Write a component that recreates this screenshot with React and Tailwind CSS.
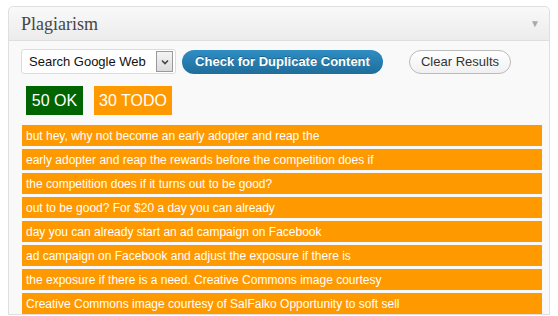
import React from "react";

const ROWS = [
  "but hey, why not become an early adopter and reap the",
  "early adopter and reap the rewards before the competition does if",
  "the competition does if it turns out to be good?",
  "out to be good? For $20 a day you can already",
  "day you can already start an ad campaign on Facebook",
  "ad campaign on Facebook and adjust the exposure if there is",
  "the exposure if there is a need. Creative Commons image courtesy",
  "Creative Commons image courtesy of SalFalko Opportunity to soft sell",
];

export default function App() {
  return (
    <div
      className="h-[316px] overflow-hidden bg-white pl-[8px] pt-[6px]"
      style={{ fontFamily: '"Liberation Sans", Arial, sans-serif' }}
    >
      <div className="w-[542px] rounded-t-[5px] border border-[#dfdfdf] bg-[#f9f9f9]">
        <div className="flex h-[34px] items-center justify-between rounded-t-[5px] border-b border-[#dfdfdf] bg-gradient-to-b from-[#f9f9f9] to-[#ececec] pl-[12px] pr-[9px]">
          <h3
            className="text-[18px] leading-none text-[#464646]"
            style={{ fontFamily: '"Liberation Serif", Georgia, serif' }}
          >
            Plagiarism
          </h3>
          <span className="text-[10px] text-[#aaa]">▼</span>
        </div>

        <div className="pl-[12px] pt-[8px]">
          <div className="flex items-center">
            <div className="flex h-[25px] w-[155px] items-center justify-between rounded-[3px] border border-[#dcdcdc] bg-white pl-[7px] pr-[2px]">
              <span className="text-[13px] text-[#111]">Search Google Web</span>
              <span className="flex h-[21px] w-[17px] items-center justify-center border border-[#9a9a9a] bg-gradient-to-b from-[#f4f4f4] to-[#dcdcdc]">
                <svg width="8" height="6" viewBox="0 0 8 6">
                  <path d="M1 1.5 L4 4.5 L7 1.5" fill="none" stroke="#444" strokeWidth="1.6" />
                </svg>
              </span>
            </div>
            <button className="ml-[6px] h-[24px] w-[201px] rounded-full bg-gradient-to-b from-[#2f8ec4] to-[#1f6d9a] text-[13px] font-bold text-white [text-shadow:0_-1px_0_rgba(0,0,0,0.3)]">
              Check for Duplicate Content
            </button>
            <button className="ml-[26px] h-[24px] w-[102px] rounded-full border border-[#bbb] bg-gradient-to-b from-white to-[#f0f0f0] text-[13px] text-[#333]">
              Clear Results
            </button>
          </div>

          <div className="mt-[12px] flex gap-[11px] pl-[5px]">
            <span className="flex h-[29px] w-[57px] items-center justify-center bg-[#006400] text-[16px] text-white">
              50 OK
            </span>
            <span className="flex h-[29px] w-[78px] items-center justify-center bg-[#ff9900] text-[16px] text-white">
              30 TODO
            </span>
          </div>

          <div className="mt-[10px] flex flex-col gap-[3px] pl-[1px]">
            {ROWS.map((t) => (
              <div
                key={t}
                className="flex h-[21px] w-[520px] items-center bg-[#ff9900] pl-[4px] text-[12px] text-white"
              >
                {t}
              </div>
            ))}
          </div>
        </div>
      </div>
    </div>
  );
}
